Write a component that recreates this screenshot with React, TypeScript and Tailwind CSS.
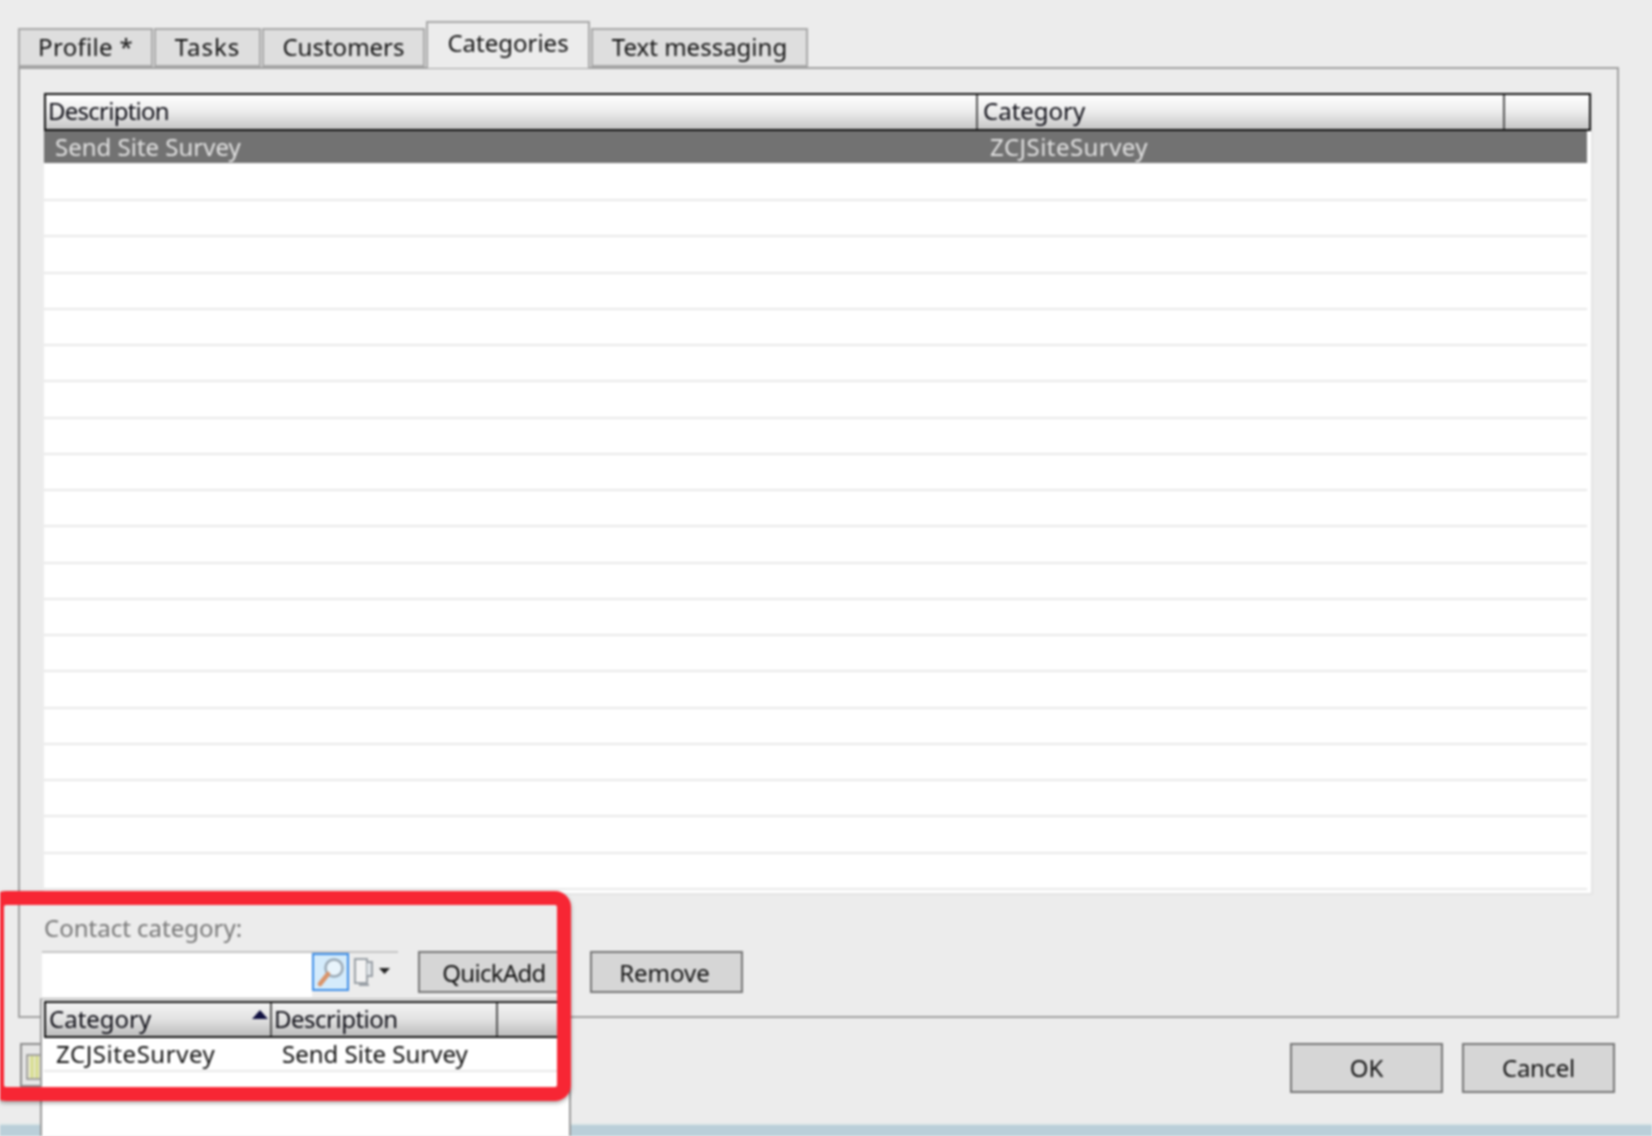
import React from "react";

const font = "font-['Noto_Sans','Liberation_Sans',sans-serif]";

function Tab({ label, active, w, track }: { label: string; active?: boolean; w: string; track?: string }) {
  return (
    <div
      className={`${w} flex justify-center border-x-2 border-t-2 border-[#a8a8a8] ${
        active
          ? "h-[47px] bg-[#ececec] pt-[3px] border-b-0 mb-[-1px] z-10 relative"
          : "h-[39px] bg-[#dedede] border-b-2 mt-[7px]"
      }`}
    >
      <span className={`text-[24px] leading-[33px] text-[#111] ${track ?? ""}`}>{label}</span>
    </div>
  );
}

function HeaderCell({ label, w, pad, track, children }: { label?: string; w: string; pad?: string; track?: string; children?: React.ReactNode }) {
  return (
    <div className={`${w} ${pad ?? "pl-[2px]"} ${track ?? ""} relative h-full flex items-center pb-[2px] border-r-2 border-[#555] last:border-r-0 text-[24px] text-[#0c0c14]`}>
      {label}
      {children}
    </div>
  );
}

function Btn({ label, w, h, track, pad }: { label: string; w: string; h: string; track?: string; pad?: string }) {
  return (
    <div className={`${w} ${h} ${track ?? ""} ${pad ?? ""} shrink-0 flex items-center justify-center border-2 border-[#767676] bg-[#d6d6d6] text-[24px] text-[#111]`}>
      {label}
    </div>
  );
}

export default function App() {
  const rows = Array.from({ length: 19 });
  return (
    <div className="w-[1652px] h-[1136px] overflow-hidden bg-[#ececec]">
      <div className={`${font} relative w-[1652px] h-[1136px] overflow-hidden bg-[#ececec] flex flex-col blur-[0.8px]`}>
        {/* tabs */}
        <div className="flex pl-[18px] pt-[21px] h-[67px] shrink-0 items-start gap-[1px]">
          <Tab label="Profile *" w="w-[135px]" track="tracking-[0.3px]" />
          <Tab label="Tasks" w="w-[107px]" track="tracking-[1px]" />
          <Tab label="Customers" w="w-[163px]" />
          <Tab label="Categories" active w="w-[164px]" />
          <Tab label="Text messaging" w="w-[217px]" />
        </div>

        {/* panel */}
        <div className="ml-[18px] w-[1601px] h-[951px] shrink-0 border-2 border-[#a0a0a0] pl-[24px] pt-[24px]">
          <div className="w-[1549px] h-[802px] bg-white border-r-2 border-b-2 border-[#e4e4e4]">
            <div className="flex h-[38px] border-2 border-[#111] bg-gradient-to-b from-white via-[#ececec] to-[#c6c6c6]">
              <HeaderCell label="Description" w="w-[932px]" track="tracking-[-0.75px]" />
              <HeaderCell label="Category" w="w-[527px]" pad="pl-[5px]" />
              <HeaderCell w="flex-1" />
            </div>
            <div className="w-[1543px] h-[32px] bg-[#727272] flex items-center text-[24px] text-[#e2e2e2]">
              <span className="w-[935px] pl-[11px]">Send Site Survey</span>
              <span className="pl-[11px] tracking-[0.45px]">ZCJSiteSurvey</span>
            </div>
            <div className="h-[38px] border-b-2 border-[#e8e8e8] w-[1543px]" />
            {rows.map((_, i) => (
              <div key={i} className="h-[36.25px] border-b-2 border-[#e8e8e8] w-[1543px]" />
            ))}
          </div>

          <div className="pt-[16px] text-[24px] leading-[33px] text-[#777]">Contact category:</div>

          {/* lookup row */}
          <div className="flex items-start mt-[7px] -ml-[2px] gap-[20px]">
            <div className="w-[356px] h-[46px] border-t-2 border-[#c4c4c4] flex items-start">
              <div className="w-[270px] h-full bg-white" />
              <div className="w-[37px] h-[38px] border-2 border-[#3d8ee8] bg-[#d4ebfb] flex items-center justify-center">
                <svg width="30" height="32" viewBox="0 0 30 32" fill="none">
                  <circle cx="18" cy="12" r="8.5" fill="#e8f4fc" stroke="#9aa8b4" strokeWidth="2.5" />
                  <path d="M12 18 L4 28" stroke="#d9946a" strokeWidth="4.5" strokeLinecap="round" />
                </svg>
              </div>
              <div className="ml-[3px] mt-[3px]">
                <svg width="42" height="32" viewBox="0 0 42 32" fill="none">
                  <path d="M3 3h12v24H3z" fill="#f2f2f2" stroke="#9aa0a6" strokeWidth="2" />
                  <path d="M15 6h5v14h-5" fill="#dfe4e8" stroke="#9aa0a6" strokeWidth="2" />
                  <path d="M7 29h10" stroke="#9aa0a6" strokeWidth="2" />
                  <path d="M27 12h11l-5.500 6z" fill="#222" />
                </svg>
              </div>
            </div>
            <Btn label="QuickAdd" w="w-[152px]" h="h-[42px]" track="tracking-[-0.7px]" pad="pt-[2px]" />
            <Btn label="Remove" w="w-[153px]" h="h-[42px]" pad="pt-[2px] pr-[4px]" />
          </div>
        </div>

        {/* footer */}
        <div className="flex justify-end gap-[19px] pr-[37px] pt-[25px] shrink-0">
          <Btn label="OK" w="w-[153px]" h="h-[50px]" />
          <Btn label="Cancel" w="w-[153px]" h="h-[50px]" track="tracking-[-0.3px]" />
        </div>
        <div className="mt-auto h-[13px] bg-[#bacfd9] border-t-2 border-[#dfe8e8]" />

        {/* partly hidden icon behind the popup */}
        <div className="absolute left-[20px] top-[1043px]">
          <svg width="22" height="44" viewBox="0 0 22 44" fill="none">
            <path d="M1 1h20v42H1z" fill="#e6e6e6" stroke="#8c8c8c" strokeWidth="2" />
            <path d="M7 12h14v24H7z" fill="#e8e8d0" stroke="#8c8c8c" strokeWidth="1.500" />
            <path d="M12 13v22M17 13v22" stroke="#d6dc8a" strokeWidth="3" />
          </svg>
        </div>

        {/* dropdown popup */}
        <div className="absolute left-[40px] top-[998px] w-[531px] h-[140px] bg-white border-x-2 border-t-2 border-x-[#9a9a9a] border-t-[#c8c8c8] pl-[2px] pt-[1px]">
          <div className="flex h-[37px] border-2 border-[#111] bg-gradient-to-b from-[#f4f4f4] via-[#e2e2e2] to-[#bcbcbc]">
            <HeaderCell label="Category" w="w-[226px]" pad="pl-[3px]">
              <svg className="absolute right-[2px] top-[7px]" width="16" height="9" viewBox="0 0 16 9">
                <path d="M8 0l8 9H0z" fill="#101040" />
              </svg>
            </HeaderCell>
            <HeaderCell label="Description" w="w-[226px]" track="tracking-[-0.5px]" />
            <HeaderCell w="flex-1" />
          </div>
          <div className="h-[34px] flex items-center text-[24px] text-[#111] border-b-2 border-[#e8e8e8]">
            <span className="w-[226px] pl-[12px] tracking-[0.55px]">ZCJSiteSurvey</span>
            <span className="pl-[12px]">Send Site Survey</span>
          </div>
        </div>

        {/* red annotation frame */}
        <div className="absolute -left-[10px] top-[891px] w-[581px] h-[210px] rounded-[16px] border-[14px] border-[#f72634] shadow-[0_2px_4px_rgba(0,0,0,0.35)]" />
      </div>
    </div>
  );
}
